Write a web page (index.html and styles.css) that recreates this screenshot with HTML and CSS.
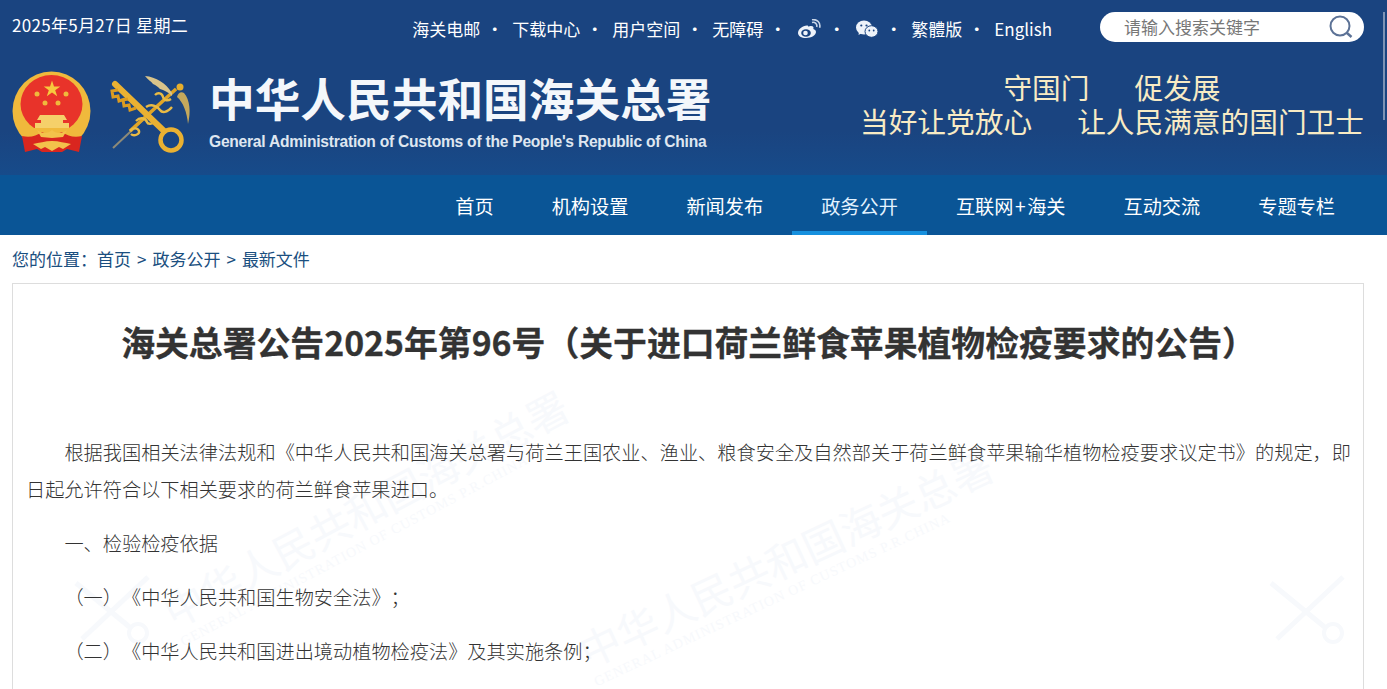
FILE: index.html
```html
<!DOCTYPE html>
<html lang="zh-CN">
<head>
  <meta charset="UTF-8" />
  <title>海关总署公告2025年第96号</title>
  <link rel="stylesheet" href="styles.css">
</head>
<body>

<header class="head">
  <div class="top-bar">
    <div class="date">2025年5月27日 星期二</div>
    <div class="top-links">
      <a>海关电邮</a><i>·</i>
      <a>下载中心</a><i>·</i>
      <a>用户空间</a><i>·</i>
      <a>无障碍</a><i>·</i>
      <svg class="social" width="24" height="20" viewBox="0 0 24 20">
        <path d="M10 6.5C5.5 6.5 1 10.5 1 14c0 3 3.500 5 8 5 5.500 0 10-3 10-6 0-1.800-1.500-2.600-2.700-3 .6-1.600.2-3-2.200-3-1.100 0-2.200.5-2.800.8C11.500 7.100 11 6.500 10 6.500z" fill="#eef3fa"/>
        <ellipse cx="9" cy="14" rx="4.800" ry="3.800" fill="#1a4480"/>
        <circle cx="8.500" cy="14" r="2.300" fill="#eef3fa"/>
        <path d="M15 3.500c3-.8 5.500 1.500 4.700 4.500M15 .8c5-1 9 3 7.600 8" fill="none" stroke="#c9d6e8" stroke-width="1.600"/>
      </svg><i>·</i>
      <svg class="social" width="22" height="18" viewBox="0 0 22 18">
        <ellipse cx="8" cy="7.500" rx="8" ry="7" fill="#eef3fa"/>
        <path d="M3 12l-.5 3 3.500-2z" fill="#eef3fa"/>
        <circle cx="5.300" cy="5.500" r="1.100" fill="#1a4480"/>
        <circle cx="10.500" cy="5.500" r="1.100" fill="#1a4480"/>
        <ellipse cx="15.500" cy="11.500" rx="6.500" ry="5.800" fill="#eef3fa" stroke="#1a4480"/>
        <circle cx="13.300" cy="10.500" r=".9" fill="#1a4480"/>
        <circle cx="17.700" cy="10.500" r=".9" fill="#1a4480"/>
      </svg><i>·</i>
      <a>繁體版</a><i>·</i>
      <a>English</a>
    </div>
    <div class="search">
      <span>请输入搜索关键字</span>
      <svg width="26" height="26" viewBox="0 0 26 26">
        <circle cx="12" cy="12" r="9.500" fill="none" stroke="#5c7296" stroke-width="2"/>
        <path d="M19 19l4.500 4" stroke="#5c7296" stroke-width="2.500" fill="none"/>
      </svg>
    </div>
  </div>

  <div class="brand-row">
    <svg class="logos" width="180" height="90" viewBox="12 68 180 90">
      <!-- emblem -->
      <ellipse cx="51.500" cy="111" rx="39" ry="39.500" fill="#f0b93c"/>
      <ellipse cx="51.500" cy="104" rx="31" ry="29" fill="#e8332a"/>
      <path d="M52 80.500l2 6h6.300l-5.100 3.700 2 6-5.200-3.700-5.200 3.700 2-6-5.100-3.700h6.300z" fill="#f7c93e"/>
      <circle cx="37" cy="94" r="2.500" fill="#f0b93c"/>
      <circle cx="66" cy="94" r="2.500" fill="#f0b93c"/>
      <circle cx="45" cy="103" r="2.500" fill="#f0b93c"/>
      <circle cx="58" cy="103" r="2.500" fill="#f0b93c"/>
      <path d="M40 115h24l3 5h-4v3h6v5H35v-5h6v-3h-4z" fill="#f5d06a"/>
      <rect x="28" y="128" width="48" height="6" fill="#f0b93c"/>
      <path d="M22 136c8 2 14 0 20-4 5 3 14 3 20 0 6 4 12 6 20 4l-3 16-12-3-5 3H42l-5-3-12 3z" fill="#d9261f"/>
      <path d="M33 144c6-1 12-3 19-3s13 2 19 3l-8 5-4-2-7 4-7-4-4 2z" fill="#f3c24b"/>
      <path d="M37 130c5 4 11 4 15 0 4 4 10 4 15 0l-4 7-11 1-11-1z" fill="#f3c24b"/>
      <!-- customs badge -->
      <path d="M113 148L176 89" stroke="#8d8a78" stroke-width="2" fill="none"/>
      <path d="M130 131L176 89" stroke="#e0a526" stroke-width="3.500" fill="none"/>
      <circle cx="180" cy="87" r="3.500" fill="#e6ae2c"/>
      <path d="M172 93C166 83 156 77 145 76c3 4 6 5 8 8 3 1 5 3 7 5 4 1 8 3 12 7z" fill="#d9c48a"/>
      <path d="M177 97c6 5 10 15 11 27 3-12 2-24-4-31-3-2-6 0-7 4z" fill="#c4a85c"/>
      <path d="M155 95c3-3 7-2 8 2s5 4 8 2M146 107c6-4 12 0 14 3s7 3 12-3M136 121c5-5 10-2 11 1s7 2 9-2M130 131c3-4 8-3 9 0s-5 6-8 3" stroke="#e9bb45" stroke-width="2.400" fill="none"/>
      <path d="M115 84l49 47" stroke="#eab132" stroke-width="6" stroke-linecap="round" fill="none"/>
      <path d="M118 90l-6 1 1 6 5-1 1 5 6-2M128 99l-5 1 1 6 5-1 1 5 6-2" stroke="#dc9c21" stroke-width="3" fill="none"/>
      <circle cx="171" cy="140" r="10.500" fill="none" stroke="#eab132" stroke-width="4.500"/>
    </svg>
    <div class="brand-text">
      <div class="brand-cn">中华人民共和国海关总署</div>
      <div class="brand-en">General Administration of Customs of the People's Republic of China</div>
    </div>
    <div class="slogan">
      <div><span>守国门</span><span>促发展</span></div>
      <div><span>当好让党放心</span><span>让人民满意的国门卫士</span></div>
    </div>
  </div>
</header>

<nav class="main-nav">
  <a>首页</a>
  <a>机构设置</a>
  <a>新闻发布</a>
  <a class="active">政务公开</a>
  <a>互联网<span class="plus">+</span>海关</a>
  <a>互动交流</a>
  <a>专题专栏</a>
</nav>

<div class="crumbs">您的位置：<a>首页</a><b>&gt;</b><a>政务公开</a><b>&gt;</b><a>最新文件</a></div>

<main class="article">
  <div class="wm wm-one">中华人民共和国海关总署<small>GENERAL ADMINISTRATION OF CUSTOMS P.R.CHINA</small></div>
  <div class="wm wm-two">中华人民共和国海关总署<small>GENERAL ADMINISTRATION OF CUSTOMS P.R.CHINA</small></div>
  <svg class="wm-key wm-key-left" width="90" height="80" viewBox="0 0 90 80">
    <path d="M8 14l56 46M80 8L14 70" stroke="#f7f9fc" stroke-width="5" fill="none"/>
    <circle cx="70" cy="64" r="9" fill="none" stroke="#f7f9fc" stroke-width="4"/>
  </svg>
  <svg class="wm-key wm-key-right" width="90" height="80" viewBox="0 0 90 80">
    <path d="M8 14l56 46M80 8L14 70" stroke="#f7f9fc" stroke-width="5" fill="none"/>
    <circle cx="70" cy="64" r="9" fill="none" stroke="#f7f9fc" stroke-width="4"/>
  </svg>

  <h1>海关总署公告2025年第96号（关于进口荷兰鲜食苹果植物检疫要求的公告）</h1>

  <p>根据我国相关法律法规和《中华人民共和国海关总署与荷兰王国农业、渔业、粮食安全及自然部关于荷兰鲜食苹果输华植物检疫要求议定书》的规定，即日起允许符合以下相关要求的荷兰鲜食苹果进口。</p>
  <p>一、检验检疫依据</p>
  <p>（一）《中华人民共和国生物安全法》；</p>
  <p>（二）《中华人民共和国进出境动植物检疫法》及其实施条例；</p>
</main>

<div class="scroll-thumb"></div>

</body>
</html>
```

FILE: styles.css
```css
html {
  overflow: hidden;
}

body {
  margin: 0;
  height: 689px;
  overflow: hidden;
  background-color: #fff;
  color: #333;
  font-family: "Noto Sans CJK SC", "Liberation Sans", sans-serif;
}

.head {
  height: 175px;
  background: linear-gradient(#1a4480 75%, #174b8a 100%);
  color: #fff;
}

.top-bar {
  display: flex;
  align-items: flex-start;
  padding: 12px 23px 0 12px;
  height: 48px;
  box-sizing: border-box;
}

.date {
  font-size: 17px;
  line-height: 26px;
  letter-spacing: .3px;
}

.top-links {
  display: flex;
  align-items: center;
  margin-left: auto;
  margin-right: 48px;
  height: 32px;
  font-size: 17px;
}

.top-links i {
  box-sizing: border-box;
  width: 32px;
  padding-right: 3px;
  text-align: center;
  font-style: normal;
}

.social {
  margin: 2px 1.5px 0;
}

.search {
  display: flex;
  align-items: center;
  justify-content: space-between;
  box-sizing: border-box;
  width: 264px;
  height: 30px;
  padding: 0 10px 0 24px;
  background-color: #fff;
  border-radius: 15px;
  color: #777;
  font-size: 17px;
}

.search span {
  margin-top: -2px;
}

.brand-row {
  display: flex;
  align-items: flex-start;
  padding: 20px 23px 0 12px;
}

.brand-text {
  margin-left: 17px;
}

.brand-cn {
  font-size: 45.7px;
  line-height: 58px;
  font-weight: 700;
  color: #f4f7fb;
  white-space: nowrap;
}

.brand-en {
  margin-top: 7px;
  font-family: "Liberation Sans", sans-serif;
  font-size: 15.6px;
  font-weight: 700;
  letter-spacing: -.24px;
  color: #dfe6f0;
  white-space: nowrap;
}

.slogan {
  margin-left: auto;
  padding-top: 2px;
  text-align: center;
  font-size: 28.7px;
  line-height: 34px;
  color: #f8ebc4;
  white-space: nowrap;
}

.slogan span + span {
  margin-left: 45px;
}

.main-nav {
  display: flex;
  justify-content: flex-end;
  height: 60px;
  padding-right: 23px;
  background-color: #0a5596;
}

.main-nav a {
  padding: 0 29px;
  line-height: 62px;
  font-size: 19.2px;
  color: #fff;
}

.main-nav .plus {
  margin: 0 1.5px;
}

.main-nav .active {
  box-sizing: border-box;
  border-bottom: 4px solid #1690de;
  color: #e4f3ff;
}

.crumbs {
  padding: 11px 12px 0;
  font-size: 17px;
  line-height: 26px;
  color: #1b4f80;
}

.crumbs b {
  margin: 0 6px;
  font-weight: 400;
}

.article {
  position: relative;
  overflow: hidden;
  box-sizing: border-box;
  min-height: 500px;
  margin: 11px 23px 0 12px;
  padding: 33px 12px 0 13px;
  border: 1px solid #ddd;
  text-spacing-trim: space-all;
}

.article h1 {
  position: relative;
  margin: 0 0 67px;
  font-size: 33.85px;
  line-height: 50px;
  font-weight: 700;
  -webkit-text-stroke: .3px #333;
  text-align: center;
  color: #333;
}

.article p {
  position: relative;
  margin: 0 0 17.5px;
  text-indent: 2em;
  font-size: 19.2px;
  line-height: 36.5px;
  font-weight: 300;
  text-align: justify;
  color: #333;
}

.wm {
  position: absolute;
  width: 460px;
  font-size: 41px;
  line-height: 50px;
  white-space: nowrap;
  color: #f7f9fc;
  transform: rotate(-28deg);
}

.wm small {
  display: block;
  font-family: "Liberation Serif", serif;
  font-size: 14px;
  line-height: 18px;
  letter-spacing: 1px;
}

.wm-one {
  left: 130px;
  top: 195px;
}

.wm-two {
  left: 550px;
  top: 245px;
  transform: rotate(-25deg);
}

.wm-key {
  position: absolute;
  top: 285px;
}

.wm-key-left {
  left: 55px;
}

.wm-key-right {
  left: 1250px;
}

.scroll-thumb {
  position: fixed;
  top: 12px;
  right: 2px;
  width: 2px;
  height: 108px;
  background-color: #7d93b5;
}
```
